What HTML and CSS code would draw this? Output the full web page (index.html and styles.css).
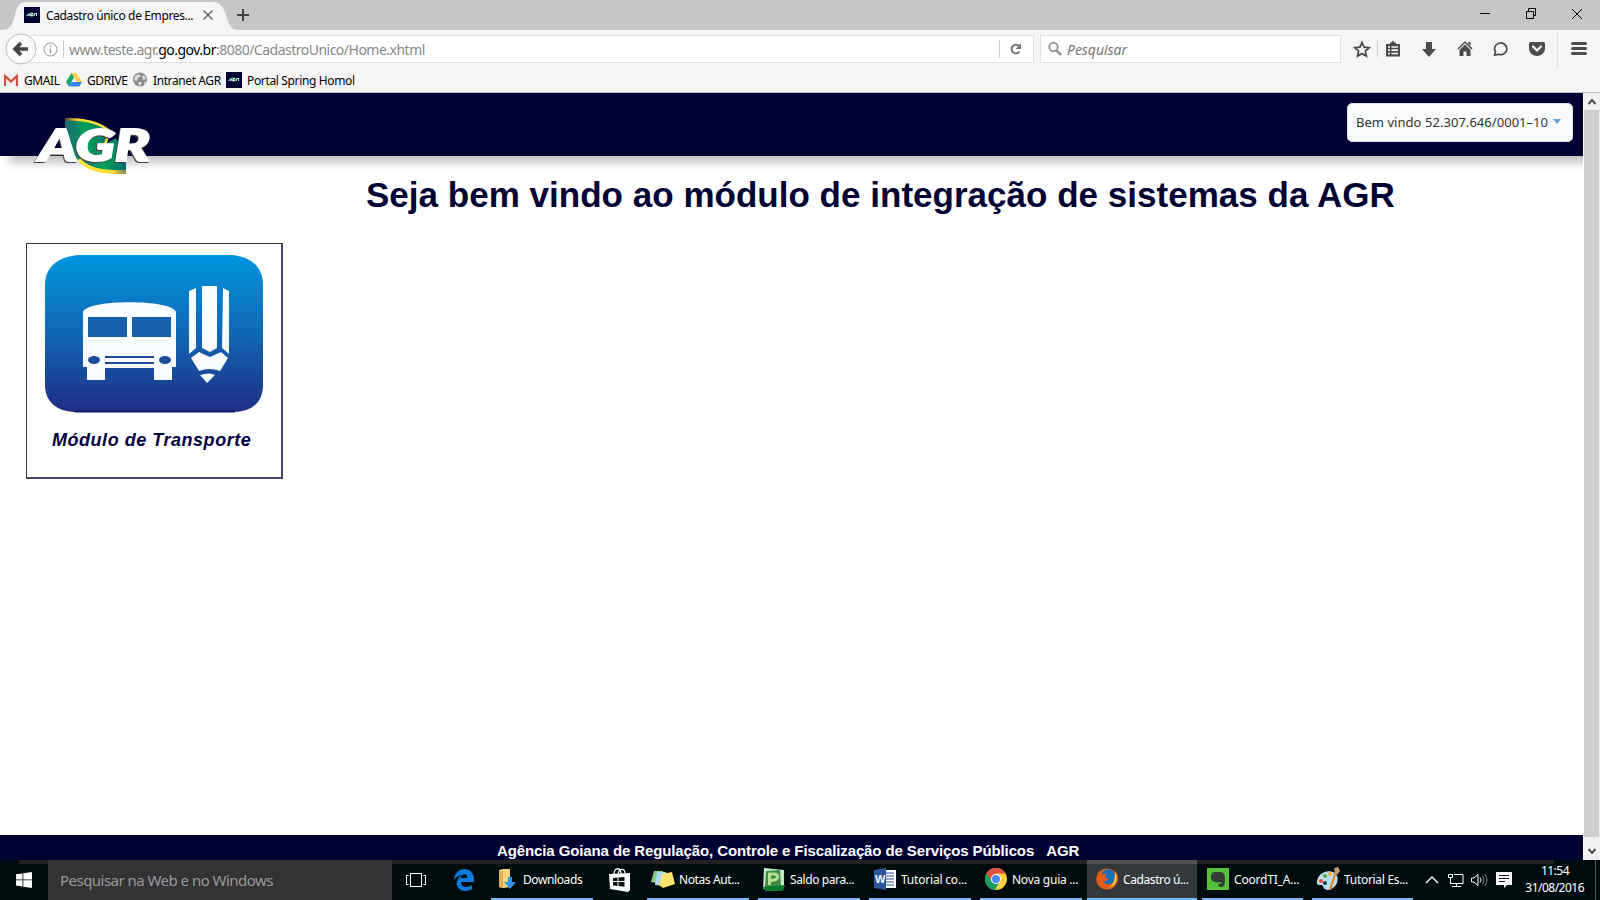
FILE: index.html
```html
<!DOCTYPE html>
<html lang="pt-BR">
<head>
<meta charset="utf-8">
<title>Cadastro único de Empresas</title>
<link rel="stylesheet" href="styles.css">
</head>
<body>
<div class="desktop">
  <div class="tabs">
    <svg class="tabshape" width="240" height="30"><path d="M0 30C10 30 12 26 15 15C17 6 19 2 27 2H212C220 2 223 6 226 15C229 26 231 30 240 30Z" fill="#f5f5f5"/></svg>
    <svg class="fav" width="16" height="16"><use href="#agrmini"/></svg>
    <span class="tabtitle">Cadastro único de Empres...</span>
    <svg class="x" width="12" height="12"><path d="M1.500 1.500l9 9m0-9l-9 9" stroke="#555" stroke-width="1.200"/></svg>
    <svg class="plus" width="14" height="14"><path d="M7 1v12M1 7h12" stroke="#444" stroke-width="2"/></svg>
    <svg class="win" width="104" height="14" fill="none" stroke="#000"><path d="M0 6.500h10M46.500 4.500h7v7h-7zM48.500 4v-2.500h7v7H54M92 2l10 10m0-10l-10 10"/></svg>
  </div>
  <div class="toolbar">
    <svg class="back" width="32" height="32"><circle cx="16" cy="16" r="15" fill="#fbfbfb" stroke="#bbb"/><path d="M23 16H11M16 10l-6 6 6 6" fill="none" stroke="#444" stroke-width="3.600"/></svg>
    <div class="url">
      <svg class="info" width="15" height="15" fill="none" stroke="#999"><circle cx="7.500" cy="7.500" r="6.500"/><path d="M7.500 6.500v5M7.500 3.500v1.700" stroke-width="1.400"/></svg>
      <i class="sep"></i>
      <span class="address">www.teste.agr.<b>go.gov.br</b>:8080/CadastroUnico/Home.xhtml</span>
      <i class="sep reloadsep"></i>
      <svg class="reload" width="14" height="14"><path d="M10.500 9.500A4.300 4.300 0 1 1 10 4" fill="none" stroke="#777" stroke-width="2"/><path d="M12 1v6H6.500z" fill="#777"/></svg>
    </div>
    <div class="find">
      <svg width="15" height="16" fill="none" stroke="#999"><circle cx="5.500" cy="6" r="4.200" stroke-width="2"/><path d="M8.500 9.500l4.500 4.500" stroke-width="2.600"/></svg>
      <span>Pesquisar</span>
    </div>
    <svg class="tools" width="240" height="38" fill="#4c4c4c">
      <path d="M12 12.500l2.100 4.600 5 .6-3.700 3.400 1 5-4.400-2.500-4.400 2.500 1-5-3.700-3.400 5-.6z" fill="none" stroke="#4c4c4c" stroke-width="1.800"/>
      <path d="M27.500 11v16" stroke="#ccc"/>
      <path d="M36 14h4v-1.500h1.500l1.500-2 1.500 2H46V14h4v12.500H36z"/><path d="M38 17h2M41.500 17h6.500M38 20.200h2M41.500 20.200h6.500M38 23.500h2M41.500 23.500h6.500" stroke="#f5f5f5" stroke-width="1.700"/>
      <path d="M76 12h6v7h4l-7 8-7-8h4z"/>
      <path d="M115 12l7 7M115 12l-7 7" stroke="#4c4c4c" stroke-width="1.500"/><path d="M118.500 12h2v4l-2-2zM109.500 20l5.500-5.500 5.500 5.500v6h-4v-4.500h-3V26h-4z"/>
      <path d="M144.500 25.200l1-3.200a6.200 5.800 0 1 1 3.200 2.300z" fill="none" stroke="#4c4c4c" stroke-width="1.700"/>
      <path d="M179 13.500q0-1.500 1.500-1.500h13q1.500 0 1.500 1.500V18c0 10.500-16 10.500-16 0z"/><path d="M183 16.500l4 4 4-4" fill="none" stroke="#f5f5f5" stroke-width="2.200" stroke-linecap="round"/>
      <path d="M207.500 2v36" stroke="#ddd"/>
      <path d="M222.500 13.500h13M222.500 18.500h13M222.500 23.500h13" stroke="#4c4c4c" stroke-width="3" stroke-linecap="round"/>
    </svg>
  </div>
  <div class="bookmarks">
    <svg width="14" height="16"><path d="M0 3h14v11H0z" fill="#eee"/><path d="M1 14V4l6 5.500L13 4v10" fill="none" stroke="#d54b3d" stroke-width="2.200"/></svg><span class="b1">GMAIL</span>
    <svg width="16" height="16"><path d="M5.500 1h5L16 10h-5.200z" fill="#ffcf48"/><path d="M5.500 1L8 5.500 2.800 14.500 0 10z" fill="#11a861"/><path d="M5.500 10H16l-2.700 4.500H2.800z" fill="#3a82f4"/></svg><span class="b2">GDRIVE</span>
    <svg width="15" height="16"><circle cx="7" cy="7.500" r="7" fill="#8b8b8b"/><path d="M2 4l4-2 2 2-3 2-1 3-3-1zM9 4l3 0 1 3-3 1zM5 10l3 0 1 2-3 2zM11 10h2l-2 3z" fill="#ddd"/></svg><span class="b3">Intranet AGR</span>
    <svg width="16" height="16"><use href="#agrmini"/></svg><span class="b4">Portal Spring Homol</span>
  </div>
  <div class="view">
    <div class="page">
      <header class="top">
        <svg class="logo" width="120" height="60">
          <defs><linearGradient id="gr"><stop offset="0" stop-color="#17697b"/><stop offset=".5" stop-color="#04a156"/><stop offset="1" stop-color="#046e70"/></linearGradient>
          <linearGradient id="ye"><stop offset="0" stop-color="#ffe53b" stop-opacity=".3"/><stop offset=".3" stop-color="#ffdd2f"/><stop offset="1" stop-color="#ffe53b"/></linearGradient>
          <linearGradient id="yf"><stop offset="0" stop-color="#ffe53b"/><stop offset=".7" stop-color="#ffdd2f"/><stop offset="1" stop-color="#8c8a50"/></linearGradient></defs>
          <path d="M31 2C52 1 70 7 77 15L72 30 31 24z" fill="url(#ye)"/><path d="M31 5C52 4 66 9 75 16L66 36 44 44 31 24z" fill="url(#gr)"/>
          <path d="M92 58C69 59 51 55 44 44L60 36 92 42z" fill="url(#yf)"/><path d="M92 54C70 55 56 52 48 44L75 26 82 22 92 44z" fill="url(#gr)"/>
          <g class="mark"><text x="5" y="45" textLength="111" lengthAdjust="spacingAndGlyphs">AGR</text></g>
        </svg>
        <div class="user"><span>Bem vindo 52.307.646/0001–10</span><i></i></div>
      </header>
      <main>
        <h1>Seja bem vindo ao módulo de integração de sistemas da AGR</h1>
        <div class="card">
          <svg width="220" height="160">
            <defs><linearGradient id="bl" x2="0" y2="1"><stop stop-color="#0095df"/><stop offset=".5" stop-color="#1167b6"/><stop offset="1" stop-color="#202d83"/></linearGradient></defs>
            <path d="M35 0H185C207 1 218 13 218 30V130C218 147 207 157 188 157H32C12 157 0 147 0 130V30C0 13 12 1 35 0Z" fill="url(#bl)"/>
            <path d="M30 156.500H190" stroke="#101c68" stroke-width="2"/>
            <g fill="#f6fcff">
              <path d="M38 57C42 44 127 44 131 57V112H127V125H109V113H60V125H42V112H38z"/>
              <path d="M144 36l7-3v60l-7 6zM157 31h15v62l-7 4-8-4zM178 33l6 3v63l-7-6zM146 103l8-6 11 5 11-5 7 6-8 13q-10-4-21 0zM155 120q10-3 15 0l-8 8z"/>
            </g>
            <g fill="#1760ab"><path d="M43 62H82V82H43zM87 62h39v20H87z"/><g fill="#1d4d98"><ellipse cx="49" cy="105" rx="6" ry="4"/><ellipse cx="120" cy="105" rx="6" ry="4"/><path d="M60 101h49v2H60zM60 107h49v2H60z"/></g></g>
          </svg>
          <strong>Módulo de Transporte</strong>
        </div>
      </main>
      <footer><span>Agência Goiana de Regulação, Controle e Fiscalização de Serviços Públicos</span><span>AGR</span></footer>
    </div>
    <div class="scroll">
      <svg width="16" height="17"><path d="M4.500 11l3.500-4 3.500 4" fill="none" stroke="#505050" stroke-width="2"/></svg>
      <div class="thumb"></div>
      <svg width="16" height="23"><path d="M4.500 12l3.500 4 3.500-4" fill="none" stroke="#505050" stroke-width="2"/></svg>
    </div>
  </div>
  <div class="taskbar">
    <div class="start"><svg width="16" height="16" fill="#fff"><path d="M0 2.300l6.500-.9v6.100H0zM7.300 1.200L16 0v7.500H7.300zM0 8.300h6.500v6.200L0 13.600zM7.300 8.300H16V16l-8.700-1.200z"/></svg></div>
    <div class="search">Pesquisar na Web e no Windows</div>
    <div class="plain tv"><svg width="20" height="14" fill="none" stroke="#fff"><path d="M4.500.5h11v13h-11zM2.500 2.500h-2v9h2M17.500 2.500h2v9h-2"/></svg></div>
    <div class="plain edge"><svg width="20" height="22"><path d="M0 11C1-4 20-3 20 10V13H7c0 6 7 6 11 3v4C10 25 1 20 3 12c1-3 3-5 5-6-3 0-6 2-8 5zM7 9h6.500c0-5-6-5-6.500 0z" fill="#0a7bdc"/></svg></div>
    <div class="task t1"><svg width="20" height="22"><path d="M1 2l4-1h7v18l-6 1-5-1z" fill="#f7d57c"/><path d="M1 2l4 2v16l-4-1z" fill="#dfb152"/><path d="M10 9h4v5h4l-6 7-6-7h4z" fill="#2f92e8"/></svg><span>Downloads</span></div>
    <div class="plain store"><svg width="22" height="24"><path d="M0 6l21-1v17l-2 2L1 21z" fill="#fff"/><path d="M5 6C5-1 12-1 12 6M9 6C10 0 16 0 16 5" fill="none" stroke="#fff" stroke-width="1.300"/><path d="M4 10l4.500-.4V13H4zM9.500 9.500l6-.5v4h-6zM4 14h4.500v4L4 17.500zM9.500 14h6v4.700l-6-.6z" fill="#061010"/></svg></div>
    <div class="task t2"><svg width="24" height="22"><path d="M3 3l9 0 0 13-12-2z" fill="#8dcb85"/><path d="M6 4h9v14l-11-1z" fill="#a9d8f1"/><path d="M11 6l10-2 3 12-12 4-4-3z" fill="#ffe36d"/></svg><span>Notas Aut...</span></div>
    <div class="task t3"><svg width="22" height="24"><path d="M1 1l20 2v17l-21 2z" fill="#cce4c8"/><path d="M3 4l14-1 1 17-16 1z" fill="#3a8d43"/><path d="M0 20l22-2-2 6H2z" fill="#0a7b32"/><path d="M6.500 18V7h4q5 0 4 3.500-1 3-7 3" fill="none" stroke="#b5e394" stroke-width="3"/></svg><span>Saldo para...</span></div>
    <div class="task t4"><svg width="23" height="22"><path d="M11 2h12v18H11z" fill="#fff"/><path d="M13 5h8M13 8h8M13 11h8M13 14h8M13 17h8" stroke="#2b579a" stroke-width="1.200"/><path d="M1 2l12-2v22L1 20z" fill="#2b579a"/><text class="w" x="2" y="15">W</text></svg><span>Tutorial co...</span></div>
    <div class="task t5"><svg width="22" height="22"><circle cx="11" cy="11" r="11" fill="#ffcd40"/><path d="M1.500 5.500A11 11 0 0 1 20.500 5.500H11L6 13z" fill="#df5044"/><path d="M1.500 5.500L7 14l7 0-4 8A11 11 0 0 1 1.500 5.500z" fill="#17a05d"/><circle cx="11" cy="11" r="5" fill="#fff"/><circle cx="11" cy="11" r="4" fill="#4a8af4"/></svg><span>Nova guia ...</span></div>
    <div class="task active t6"><svg width="22" height="22"><circle cx="11" cy="11" r="10.500" fill="#ef6a1c"/><circle cx="12.500" cy="9" r="7.800" fill="#1b6fb5"/><path d="M2 3l4 3 4 0-1 3 3 2c-1 3-4 2-5 2 2 5 10 5 12-2 1-4-1-7-3-9 8 3 8 13 1 17S1 20 .5 12C.5 8 2 6 2 3z" fill="#e85b1c"/><path d="M19 4c3 4 2 11-2 14l-6 2c6-2 8-7 8-16z" fill="#ffca2c"/></svg><span>Cadastro ú...</span></div>
    <div class="task t7"><svg width="22" height="22"><path d="M0 0h22v22H0z" fill="#58c13c"/><path d="M4 7l4-3h4c5 0 6 2 6 7 0 6-1 8-4 8-3 0-3-4-1-4l1 1c2-1 0-2-1-2-3 1-8 0-9-3zM4 6h3V3z" fill="#323c35"/></svg><span>CoordTI_A...</span></div>
    <div class="task t8"><svg width="24" height="24"><path d="M1 14C3 5 12 2 19 6c6 6 1 16-7 17-5 0-4-4-6-5-3 0-6 0-5-4z" fill="#b9dff3"/><circle cx="5" cy="14" r="2" fill="#df4437"/><circle cx="9" cy="9" r="2" fill="#54ae3c"/><circle cx="14" cy="7" r="2" fill="#f4ad28"/><circle cx="9" cy="16" r="2" fill="#163642"/><path d="M20 4L14 23" stroke="#dd812c" stroke-width="2"/><path d="M18 1l4-1 2 4-3 4-2-2z" fill="#c69b68"/></svg><span>Tutorial Es...</span></div>
    <svg class="tray" width="90" height="40" fill="none" stroke="#fff">
      <path d="M2 23l6-6 6 6" stroke-width="1.300"/>
      <path d="M30 14.500h9v9H27M32.500 24v3M28 26.500h9M24.500 14.500h4v3h-4zM26.500 18v6"/>
      <path d="M48.500 18h2.500l4-3.500v11L51 22h-2.500z" transform="translate(-1)"/><path d="M56 17.500q2 2.500 0 5"/><path d="M58.500 16q3 4 0 8M61 14.500q4 5.500 0 11" stroke="#888"/>
      <path d="M72 12h16v13h-5l-3 3v-3h-8z" fill="#fff" stroke="none"/><path d="M75 15.500h10M75 18.500h10M75 21.500h6" stroke="#061010"/>
    </svg>
    <div class="clock"><span>11:54</span><span class="date">31/08/2016</span></div>
  </div>
</div>
<svg width="0" height="0" class="defs"><symbol id="agrmini" viewBox="0 0 16 16"><path d="M0 0h16v16H0z" fill="#000033"/><path d="M5 6q4-2 5 1v2q-3 2-4 0z" fill="#279063"/><path d="M2.500 9L5 6.500V9M3.500 8h2M9 6.500H7.500l-1 2h2V8M10 9l.6-2.500H13L12 8l1 1" fill="none" stroke="#fff" stroke-width=".9"/></symbol></svg>
</body>
</html>
```
FILE: styles.css
```css
* { box-sizing: border-box; }
body { margin: 0; overflow: hidden; font: 12px "Noto Sans", sans-serif; color: #000; }
svg { display: block; flex: none; }
.defs { position: absolute; }
.desktop { width: 1600px; height: 900px; display: flex; flex-direction: column; background: #fff; }
span { white-space: nowrap; }

.tabs { height: 30px; background: #c6c6c6; display: flex; align-items: center; position: relative; padding-left: 24px; flex: none; }
.tabshape { position: absolute; left: 0; top: 0; }
.fav, .tabtitle, .x { position: relative; }
.tabtitle { width: 151px; margin-left: 6px; letter-spacing: -.37px; }
.x { margin-left: 5px; }
.plus { margin-left: 22px; }
.win { margin: -2px 16px 0 auto; }

.toolbar { height: 38px; background: #f5f5f5; display: flex; align-items: center; flex: none; padding-left: 5px; }
.back { position: relative; z-index: 1; }
.url { width: 1004px; height: 28px; margin-left: -7px; background: #fff; border: 1px solid #e0e0e0; display: flex; align-items: center; font-size: 14px; color: #888; }
.info { margin-left: 12px; }
.sep { width: 1px; height: 18px; background: #ccc; margin-left: 5px; }
.address { margin-left: 5px; letter-spacing: -.51px; }
.address b { color: #000; font-weight: 400; }
.reloadsep { margin-left: auto; }
.reload { margin: 0 10px 0 9px; }
.find { width: 301px; height: 28px; margin-left: 6px; background: #fff; border: 1px solid #e0e0e0; display: flex; align-items: center; padding-left: 7px; gap: 4px; font-size: 14px; font-style: italic; color: #777; }
.find span { letter-spacing: -.05px; }
.tools { margin-left: 9px; }

.bookmarks { height: 25px; background: #f5f5f5; border-bottom: 1px solid #bbb; display: flex; align-items: center; padding: 0 0 0 4px; flex: none; }
.bookmarks span { letter-spacing: -.4px; }
.b1 { width: 42px; margin-left: 6px; }
.b2 { width: 46px; margin-left: 5px; }
.b3 { width: 73px; margin-left: 5px; }
.bookmarks .b4 { margin-left: 5px; letter-spacing: -.35px; }

.view { height: 767px; display: flex; flex: none; }
.page { width: 1583px; height: 767px; display: flex; flex-direction: column; overflow: hidden; }
.top { height: 63px; background: #000033; box-shadow: 9px 7px 9px rgba(0,0,0,.24); display: flex; align-items: flex-start; padding: 10px 10px 0 34px; flex: none; }
.logo { margin-top: 13px; overflow: visible; }
.mark { font: italic 900 43px "Lato", sans-serif; fill: #fff; stroke: #fff; stroke-width: 2; filter: drop-shadow(-1px 1px 0 #444); }
.user { width: 226px; height: 39px; margin-left: auto; background: #f9fafc; border: 1px solid #ddd; border-radius: 5px; display: flex; align-items: center; padding: 0 0 2px 8px; font-size: 13px; color: #333; letter-spacing: .04px; }
.user i { margin-left: auto; margin-right: 11px; border: 4px solid transparent; border-top: 5px solid #68a4d3; border-bottom: 0; }
main { flex: 1; padding: 18px 0 0 26px; }
h1 { margin: 0; padding-left: 340px; font: bold 35px/41px "Liberation Sans", sans-serif; letter-spacing: .02px; color: #000033; white-space: nowrap; }
.card { width: 257px; height: 236px; margin-top: 28px; border: 1px solid #333; border-right: 2px solid #44446a; border-bottom: 2px solid #44446a; padding: 11px 0 0 18px; }
.card strong { display: block; margin: 13px 0 0 7px; font: italic bold 18px/24px "Liberation Sans", sans-serif; letter-spacing: .53px; color: #000040; white-space: nowrap; }
footer { height: 25px; background: #000033; color: #fff; display: flex; gap: 12px; padding: 7px 0 0 497px; font: bold 15px/18px "Liberation Sans", sans-serif; letter-spacing: -.11px; flex: none; }
.scroll { width: 17px; background: #f0f0f0; border-left: 1px solid #fff; display: flex; flex-direction: column; }
.thumb { flex: 1; background: #cdcdcd; margin-right: 1px; }

.taskbar { height: 40px; background: linear-gradient(#222, #222) 19px 0 / 1535px 4px no-repeat #000b0d; color: #fff; display: flex; flex: none; }
.start { width: 48px; display: flex; align-items: center; padding-left: 16px; }
.search { width: 344px; background: #333; color: #999; padding-left: 12px; font-size: 15px; line-height: 40px; letter-spacing: -.53px; white-space: nowrap; }
.plain { display: flex; align-items: center; }
.tv { width: 62px; padding-left: 14px; }
.edge { width: 37px; }
.store { width: 54px; padding: 0 0 0 16px; }
.task { width: 102px; margin-right: 9px; border-bottom: 2px solid #76b9ed; display: flex; align-items: center; padding: 0 0 0 5px; gap: 5px; letter-spacing: -.4px; }
.t1 { padding-left: 7px; margin-right: 0; }
.t2 { padding-left: 4px; gap: 4px; }
.t4 { padding-left: 4px; letter-spacing: -.2px; }
.t5 { margin-right: 5px; letter-spacing: -.25px; }
.active { width: 110px; background: linear-gradient(#505050, #505050) 0 0 / 100% 4px no-repeat #33393b; padding-left: 9px; margin-right: 5px; }
.t7 { width: 101px; letter-spacing: -.2px; }
.t8 { width: 101px; margin-right: 0; padding-left: 4px; gap: 4px; letter-spacing: -.3px; }
.w { font: bold 11px "Liberation Sans", sans-serif; fill: #fff; }
.tray { margin-left: 11px; }
.clock { flex: 1; margin-right: 4px; border-right: 1px solid #555; padding: 2px 11px 0 0; display: flex; flex-direction: column; align-items: flex-end; line-height: 17px; letter-spacing: -.52px; }
.clock span:first-child { margin-right: 15px; }
```
